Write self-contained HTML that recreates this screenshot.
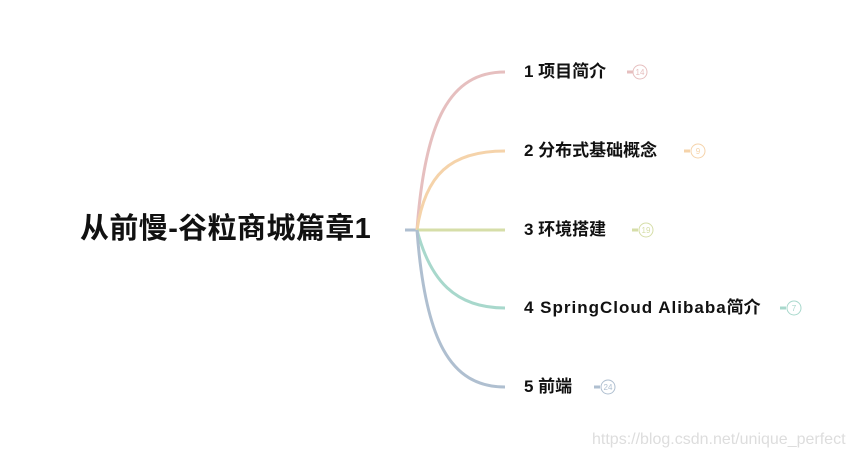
<!DOCTYPE html>
<html><head><meta charset="utf-8"><style>
body{margin:0;width:852px;height:460px;background:#fff;overflow:hidden;position:relative;font-family:"Liberation Sans","Noto Sans CJK SC",sans-serif}
.t{position:absolute;font-weight:bold;color:#111;white-space:nowrap;line-height:1;font-size:17px}
</style></head><body>
<svg width="852" height="460" style="position:absolute;left:0;top:0" fill="none" stroke-width="3">
<path d="M405 230H418" stroke="#afbfd0"/>
<path d="M417 230C425 120 450 72 505 72" stroke="#e6bfbf"/>
<path d="M417 230C425 175 450 151 505 151" stroke="#f5d3aa"/>
<path d="M417 230H505" stroke="#d6dea8"/>
<path d="M417 230C430 280 455 308 505 308" stroke="#a8d8cc"/>
<path d="M417 230C425 340 450 387 505 387" stroke="#afbfd0"/>
<g stroke-width="3"><path d="M627 72h6" stroke="#e6bfbf"/><path d="M684 151h6" stroke="#f5d3aa"/><path d="M632 230h6" stroke="#d6dea8"/><path d="M780 308h6" stroke="#a8d8cc"/><path d="M594 387h6" stroke="#afbfd0"/></g>
<g stroke-width="1" fill="#fff"><circle cx="640" cy="72" r="7" stroke="#e6bfbf"/><circle cx="698" cy="151" r="7" stroke="#f5d3aa"/><circle cx="646" cy="230" r="7" stroke="#d6dea8"/><circle cx="794" cy="308" r="7" stroke="#a8d8cc"/><circle cx="608" cy="387" r="7" stroke="#afbfd0"/></g>
<g font-family="Liberation Sans" font-size="8" text-anchor="middle" stroke="none">
<text x="640" y="75" fill="#e6bfbf">14</text><text x="698" y="154" fill="#f5d3aa">9</text><text x="646" y="233" fill="#d6dea8">19</text><text x="794" y="311" fill="#a8d8cc">7</text><text x="608" y="390" fill="#afbfd0">24</text></g>
</svg>
<div class="t" style="left:80px;top:215px;font-size:29px;letter-spacing:0.4px">从前慢-谷粒商城篇章1</div>
<div class="t" style="left:524px;top:63px">1 项目简介</div>
<div class="t" style="left:524px;top:142px">2 分布式基础概念</div>
<div class="t" style="left:524px;top:221px">3 环境搭建</div>
<div class="t" style="left:524px;top:299px"><span style="letter-spacing:1px">4 SpringCloud Alibaba</span>简介</div>
<div class="t" style="left:524px;top:378px">5 前端</div>
<div style="position:absolute;left:592px;top:431px;font-size:16px;color:#ddd;font-family:'Liberation Sans',sans-serif">https://blog.csdn.net/unique_perfect</div>
</body></html>
